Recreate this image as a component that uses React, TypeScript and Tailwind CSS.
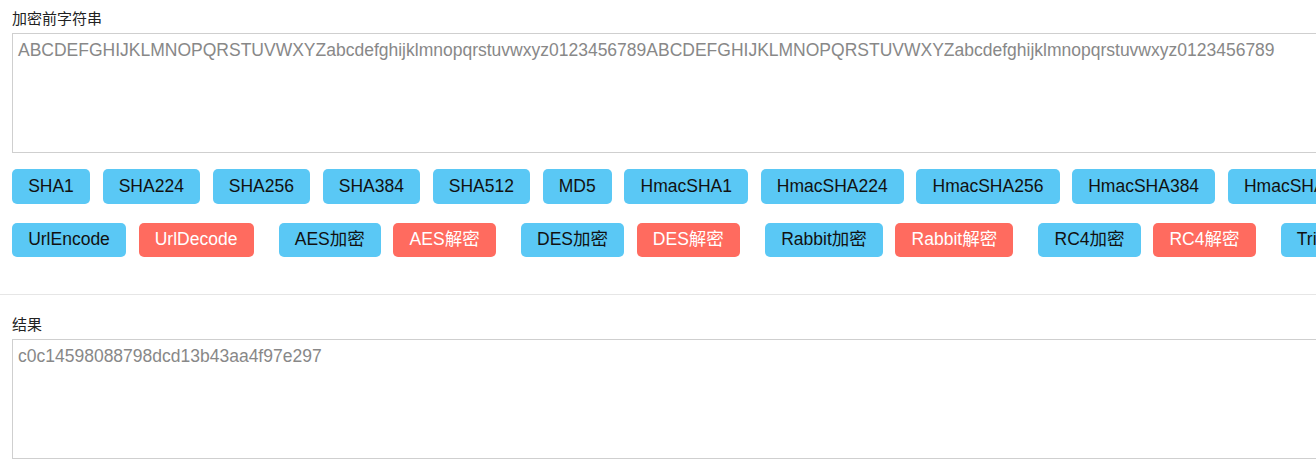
import React from "react";

const font = { fontFamily: '"Liberation Sans", Arial, "Noto Sans CJK SC", sans-serif' };

function Btn({ label, red }: { label: string; red?: boolean }) {
  return (
    <button
      className={
        red
          ? "h-[34.5px] shrink-0 rounded-[5px] bg-[#ff6b5f] px-[16.15px] text-[17.5px] leading-none whitespace-nowrap text-white"
          : "h-[34.5px] shrink-0 rounded-[5px] bg-[#5ac8f5] px-[16.15px] text-[17.5px] leading-none whitespace-nowrap text-[#111]"
      }
    >
      {label}
    </button>
  );
}

export default function App() {
  const row1 = [
    "SHA1",
    "SHA224",
    "SHA256",
    "SHA384",
    "SHA512",
    "MD5",
    "HmacSHA1",
    "HmacSHA224",
    "HmacSHA256",
    "HmacSHA384",
    "HmacSHA512",
  ];
  const pairs: [string, string][] = [
    ["UrlEncode", "UrlDecode"],
    ["AES加密", "AES解密"],
    ["DES加密", "DES解密"],
    ["Rabbit加密", "Rabbit解密"],
    ["RC4加密", "RC4解密"],
    ["TripleDES加密", "TripleDES解密"],
  ];
  const text =
    "ABCDEFGHIJKLMNOPQRSTUVWXYZabcdefghijklmnopqrstuvwxyz0123456789ABCDEFGHIJKLMNOPQRSTUVWXYZabcdefghijklmnopqrstuvwxyz0123456789";
  return (
    <div className="h-[474px] w-[1316px] overflow-hidden bg-white" style={font}>
      <div className="w-[1500px]">
        <div className="px-3 pt-[8px]">
          <div className="h-[22px] text-[15px] leading-[22px] text-[#222]">加密前字符串</div>
          <div className="mt-[3px] h-[120px] w-[1400px] border border-[#cfcfcf] px-[5px] pt-[6px] text-[17.5px] leading-[20px] text-[#888]">
            {text}
          </div>
          <div className="mt-[16px] flex gap-[12.55px]">
            {row1.map((l) => (
              <Btn key={l} label={l} />
            ))}
          </div>
          <div className="mt-[19px] flex gap-[25.1px]">
            {pairs.map(([a, b]) => (
              <div key={a} className="flex gap-[12.55px]">
                <Btn label={a} />
                <Btn label={b} red />
              </div>
            ))}
          </div>
        </div>
        <div className="mt-[36.5px] h-px w-full bg-[#e6e6e6]" />
        <div className="px-3 pt-[19.5px]">
          <div className="h-[22px] text-[15px] leading-[22px] text-[#222]">结果</div>
          <div className="mt-[3px] h-[120px] w-[1400px] border border-[#cfcfcf] px-[5px] pt-[6px] text-[17.5px] leading-[20px] text-[#888]">
            c0c14598088798dcd13b43aa4f97e297
          </div>
        </div>
      </div>
    </div>
  );
}
